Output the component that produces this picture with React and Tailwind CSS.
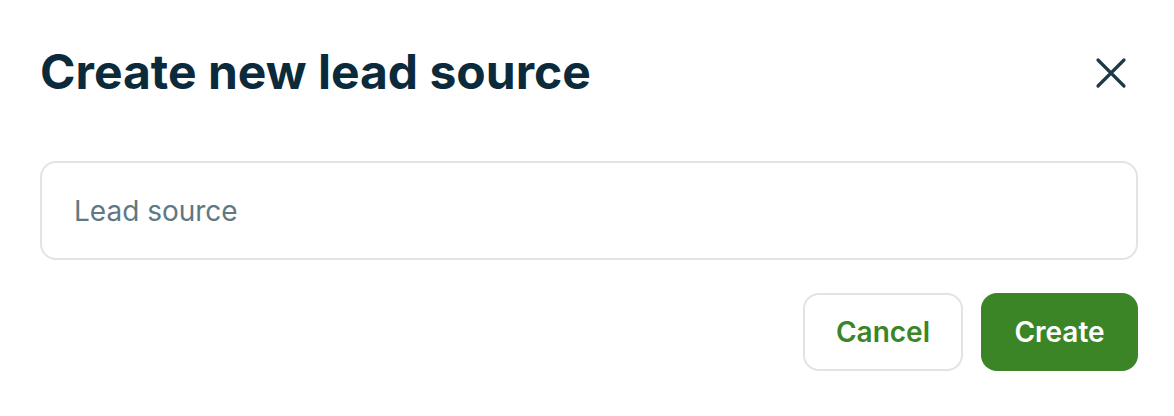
import React, { useState } from "react";

const CloseIcon = () => (
  <svg width="32" height="32" viewBox="0 0 32 32" fill="none">
    <path
      d="M3 3L29 29M29 3L3 29"
      stroke="#1f3a47"
      strokeWidth="3.2"
      strokeLinecap="round"
    />
  </svg>
);

const App = () => {
  const [name, setName] = useState("");
  return (
    <section
      className="w-[1174px] h-[416px] bg-white pl-[40px] pr-[36px] pt-[44px]"
      style={{ fontFamily: "Inter, 'Liberation Sans', sans-serif" }}
    >
      <header className="flex items-center justify-between">
        <h2 className="text-[48px] leading-[56px] font-bold text-[#0b2b3c]">
          Create new lead source
        </h2>
        <button className="mr-[11px] mt-[2px]">
          <CloseIcon />
        </button>
      </header>
      <main className="mt-[61px]">
        <input
          value={name}
          onChange={(e) => setName(e.target.value)}
          placeholder="Lead source"
          className="w-full h-[99px] rounded-[16px] border-2 border-[#e1e3e4] px-[32px] text-[28px] text-[#0b2b3c] placeholder:text-[#607882] outline-none"
        />
      </main>
      <footer className="flex justify-end gap-[18px] mt-[33px]">
        <button className="w-[160px] h-[78px] rounded-[16px] border-2 border-[#e1e3e4] bg-white text-[28px] font-semibold text-[#3b8527]">
          Cancel
        </button>
        <button className="w-[157px] h-[78px] rounded-[16px] bg-[#3b8527] text-[28px] font-semibold text-white">
          Create
        </button>
      </footer>
    </section>
  );
};

export default App;
